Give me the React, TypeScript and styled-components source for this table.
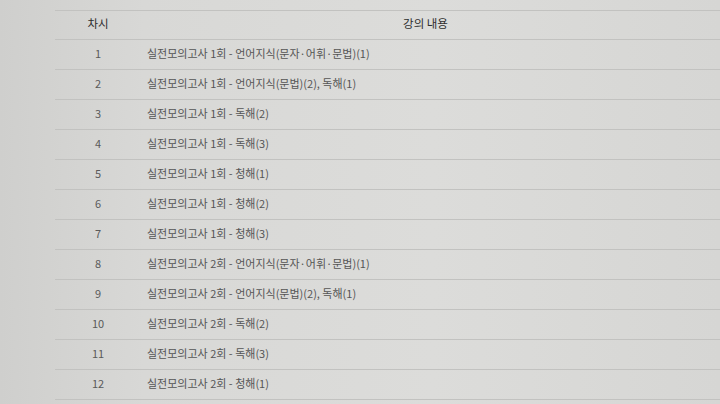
import styled, { createGlobalStyle } from "styled-components";

const GlobalStyle = createGlobalStyle`
  html, body {
    margin: 0;
    padding: 0;
    overflow: hidden;
  }
  body {
    width: 720px;
    height: 404px;
    background: linear-gradient(90deg, #cfcfcd 0%, #d8d8d6 20%, #dcdcda 60%, #d6d6d4 100%);
    font-family: "Noto Sans CJK KR", "Noto Sans", sans-serif;
  }
`;

type Lecture = {
  no: number;
  title: string;
};

const LECTURES: Lecture[] = [
  { no: 1, title: "실전모의고사 1회 - 언어지식(문자·어휘·문법)(1)" },
  { no: 2, title: "실전모의고사 1회 - 언어지식(문법)(2), 독해(1)" },
  { no: 3, title: "실전모의고사 1회 - 독해(2)" },
  { no: 4, title: "실전모의고사 1회 - 독해(3)" },
  { no: 5, title: "실전모의고사 1회 - 청해(1)" },
  { no: 6, title: "실전모의고사 1회 - 청해(2)" },
  { no: 7, title: "실전모의고사 1회 - 청해(3)" },
  { no: 8, title: "실전모의고사 2회 - 언어지식(문자·어휘·문법)(1)" },
  { no: 9, title: "실전모의고사 2회 - 언어지식(문법)(2), 독해(1)" },
  { no: 10, title: "실전모의고사 2회 - 독해(2)" },
  { no: 11, title: "실전모의고사 2회 - 독해(3)" },
  { no: 12, title: "실전모의고사 2회 - 청해(1)" },
];

export default function App() {
  return (
    <>
      <GlobalStyle />
      <Page>
        <Table>
          <HeaderRow>
            <NoCell $head>차시</NoCell>
            <TitleCell $head>강의 내용</TitleCell>
          </HeaderRow>
          {LECTURES.map((l) => (
            <Row key={l.no}>
              <NoCell>{l.no}</NoCell>
              <TitleCell>{l.title}</TitleCell>
            </Row>
          ))}
        </Table>
      </Page>
    </>
  );
}

const Page = styled.div`
  padding: 10px 0 0 55px;
`;

const Table = styled.div`
  display: flex;
  flex-direction: column;
  width: 665px;
  border-top: 1px solid #c2c2c0;
`;

const Row = styled.div`
  display: grid;
  grid-template-columns: 86px 1fr;
  align-items: center;
  box-sizing: border-box;
  height: 30px;
  padding-bottom: 4px;
  border-bottom: 1px solid #c2c2c0;
`;

const HeaderRow = styled(Row)`
  height: 29px;
`;

const NoCell = styled.div<{ $head?: boolean }>`
  text-align: center;
  font-size: ${(p) => (p.$head ? "11.5px" : "11px")};
  color: ${(p) => (p.$head ? "#2e2e2e" : "#5a5a5a")};
`;

const TitleCell = styled.div<{ $head?: boolean }>`
  text-align: ${(p) => (p.$head ? "center" : "left")};
  padding: ${(p) => (p.$head ? "0 10px 0 0" : "0 0 0 6px")};
  font-size: ${(p) => (p.$head ? "11.5px" : "11px")};
  color: ${(p) => (p.$head ? "#2e2e2e" : "#555555")};
  white-space: nowrap;
`;
